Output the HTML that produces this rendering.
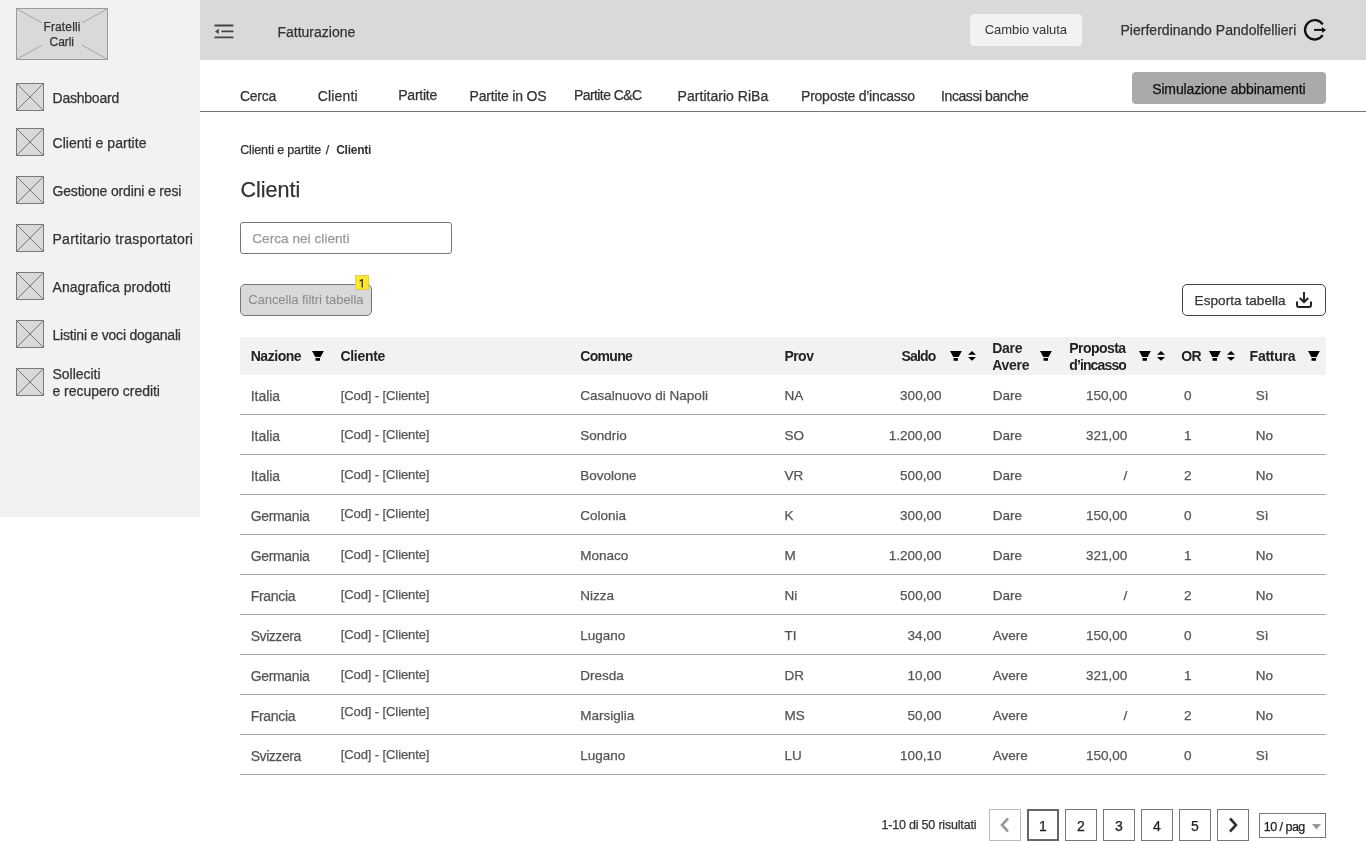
<!DOCTYPE html>
<html><head><meta charset="utf-8"><style>
html,body{margin:0;padding:0;background:#fff;width:1366px;height:841px;overflow:hidden;position:relative;}
body{font-family:"Liberation Sans",sans-serif;}
#w{position:absolute;left:0;top:0;width:1366px;height:841px;will-change:transform;}
.t{position:absolute;white-space:nowrap;line-height:1;-webkit-text-stroke:0.25px currentColor;}
svg{display:block;}
</style></head><body><div id="w">
<div style="position:absolute;left:0px;top:0px;width:200px;height:517px;background:#f2f2f2;"></div>
<svg style="position:absolute;left:16px;top:8px" width="92" height="52" viewBox="0 0 92 52">
<rect x="0.5" y="0.5" width="91" height="51" fill="#d9d9d9" stroke="#9a9a9a" stroke-width="1"/>
<line x1="1" y1="1" x2="91" y2="51" stroke="#a6a6a6" stroke-width="1"/>
<line x1="91" y1="1" x2="1" y2="51" stroke="#a6a6a6" stroke-width="1"/>
<rect x="26" y="12" width="40" height="30" fill="#d9d9d9"/>
</svg>
<div class="t" style="left:43.50px;top:20.84px;font-size:12.00px;color:#333;letter-spacing:0.124px;">Fratelli</div>
<div class="t" style="left:49.50px;top:35.84px;font-size:12.00px;color:#333;letter-spacing:-0.033px;">Carli</div>
<svg style="position:absolute;left:16px;top:83px" width="28" height="28" viewBox="0 0 28 28">
<rect x="0.5" y="0.5" width="27" height="27" fill="#d9d9d9" stroke="#7a7a7a"/>
<line x1="1" y1="1" x2="27" y2="27" stroke="#7a7a7a" stroke-width="1"/>
<line x1="27" y1="1" x2="1" y2="27" stroke="#7a7a7a" stroke-width="1"/>
</svg>
<svg style="position:absolute;left:16px;top:128px" width="28" height="28" viewBox="0 0 28 28">
<rect x="0.5" y="0.5" width="27" height="27" fill="#d9d9d9" stroke="#7a7a7a"/>
<line x1="1" y1="1" x2="27" y2="27" stroke="#7a7a7a" stroke-width="1"/>
<line x1="27" y1="1" x2="1" y2="27" stroke="#7a7a7a" stroke-width="1"/>
</svg>
<svg style="position:absolute;left:16px;top:176px" width="28" height="28" viewBox="0 0 28 28">
<rect x="0.5" y="0.5" width="27" height="27" fill="#d9d9d9" stroke="#7a7a7a"/>
<line x1="1" y1="1" x2="27" y2="27" stroke="#7a7a7a" stroke-width="1"/>
<line x1="27" y1="1" x2="1" y2="27" stroke="#7a7a7a" stroke-width="1"/>
</svg>
<svg style="position:absolute;left:16px;top:224px" width="28" height="28" viewBox="0 0 28 28">
<rect x="0.5" y="0.5" width="27" height="27" fill="#d9d9d9" stroke="#7a7a7a"/>
<line x1="1" y1="1" x2="27" y2="27" stroke="#7a7a7a" stroke-width="1"/>
<line x1="27" y1="1" x2="1" y2="27" stroke="#7a7a7a" stroke-width="1"/>
</svg>
<svg style="position:absolute;left:16px;top:272px" width="28" height="28" viewBox="0 0 28 28">
<rect x="0.5" y="0.5" width="27" height="27" fill="#d9d9d9" stroke="#7a7a7a"/>
<line x1="1" y1="1" x2="27" y2="27" stroke="#7a7a7a" stroke-width="1"/>
<line x1="27" y1="1" x2="1" y2="27" stroke="#7a7a7a" stroke-width="1"/>
</svg>
<svg style="position:absolute;left:16px;top:320px" width="28" height="28" viewBox="0 0 28 28">
<rect x="0.5" y="0.5" width="27" height="27" fill="#d9d9d9" stroke="#7a7a7a"/>
<line x1="1" y1="1" x2="27" y2="27" stroke="#7a7a7a" stroke-width="1"/>
<line x1="27" y1="1" x2="1" y2="27" stroke="#7a7a7a" stroke-width="1"/>
</svg>
<svg style="position:absolute;left:16px;top:368px" width="28" height="28" viewBox="0 0 28 28">
<rect x="0.5" y="0.5" width="27" height="27" fill="#d9d9d9" stroke="#7a7a7a"/>
<line x1="1" y1="1" x2="27" y2="27" stroke="#7a7a7a" stroke-width="1"/>
<line x1="27" y1="1" x2="1" y2="27" stroke="#7a7a7a" stroke-width="1"/>
</svg>
<div class="t" style="left:52.50px;top:91.35px;font-size:14.00px;color:#333;letter-spacing:-0.221px;">Dashboard</div>
<div class="t" style="left:52.50px;top:136.35px;font-size:14.00px;color:#333;letter-spacing:0.037px;">Clienti e partite</div>
<div class="t" style="left:52.50px;top:184.35px;font-size:14.00px;color:#333;letter-spacing:-0.163px;">Gestione ordini e resi</div>
<div class="t" style="left:52.50px;top:232.35px;font-size:14.00px;color:#333;letter-spacing:0.254px;">Partitario trasportatori</div>
<div class="t" style="left:52.50px;top:280.35px;font-size:14.00px;color:#333;letter-spacing:0.041px;">Anagrafica prodotti</div>
<div class="t" style="left:52.50px;top:328.35px;font-size:14.00px;color:#333;letter-spacing:-0.212px;">Listini e voci doganali</div>
<div class="t" style="left:52.50px;top:367.15px;font-size:14.00px;color:#333;letter-spacing:-0.027px;">Solleciti</div>
<div class="t" style="left:52.50px;top:383.55px;font-size:14.00px;color:#333;letter-spacing:-0.042px;">e recupero crediti</div>
<div style="position:absolute;left:200px;top:0px;width:1166px;height:60px;background:#d9d9d9;"></div>
<svg style="position:absolute;left:213px;top:22px" width="22" height="18" viewBox="0 0 22 18">
<g stroke="#444" stroke-width="1.8" stroke-linecap="round">
<line x1="2.2" y1="3.5" x2="19.7" y2="3.5"/>
<line x1="9.2" y1="9.45" x2="19.7" y2="9.45"/>
<line x1="2.2" y1="15.4" x2="19.7" y2="15.4"/>
</g>
<path d="M2 9.45 L5.8 6.8 L5.8 12.1 Z" fill="#444"/>
</svg>
<div class="t" style="left:277.40px;top:24.55px;font-size:14.00px;color:#333;letter-spacing:0.015px;">Fatturazione</div>
<div style="position:absolute;left:970px;top:14px;width:112px;height:32px;background:#f2f2f2;border-radius:4px;"></div>
<div class="t" style="left:984.80px;top:23.00px;font-size:13.00px;color:#333;-webkit-text-stroke:0;letter-spacing:-0.084px;">Cambio valuta</div>
<div class="t" style="left:1120.40px;top:23.15px;font-size:14.00px;color:#333;letter-spacing:0.031px;">Pierferdinando Pandolfellieri</div>
<svg style="position:absolute;left:1300px;top:16px" width="30" height="28" viewBox="0 0 30 28">
<path d="M22.74 8.38 A9.7 9.7 0 1 0 22.74 19.22" fill="none" stroke="#111" stroke-width="2.3"/>
<rect x="14" y="12.9" width="9" height="2" fill="#111"/>
<path d="M22 10.9 L26 13.9 L22 16.9 Z" fill="#111"/>
</svg>
<div class="t" style="left:240.00px;top:89.15px;font-size:14px;color:#333;letter-spacing:-0.269px">Cerca</div>
<div class="t" style="left:317.70px;top:89.15px;font-size:14px;color:#333;letter-spacing:0.185px">Clienti</div>
<div class="t" style="left:398.30px;top:88.15px;font-size:14px;color:#333;letter-spacing:-0.266px">Partite</div>
<div class="t" style="left:469.50px;top:89.15px;font-size:14px;color:#333;letter-spacing:-0.197px">Partite in OS</div>
<div class="t" style="left:573.90px;top:88.15px;font-size:14px;color:#333;letter-spacing:-0.564px">Partite C&amp;C</div>
<div class="t" style="left:677.60px;top:89.15px;font-size:14px;color:#333;letter-spacing:0.030px">Partitario RiBa</div>
<div class="t" style="left:801.10px;top:89.15px;font-size:14px;color:#333;letter-spacing:-0.255px">Proposte d&#8217;incasso</div>
<div class="t" style="left:941.10px;top:89.15px;font-size:14px;color:#333;letter-spacing:-0.435px">Incassi banche</div>
<div style="position:absolute;left:200px;top:111px;width:1166px;height:1px;background:#777;"></div>
<div style="position:absolute;left:1132px;top:72px;width:194px;height:32px;background:#aaaaaa;border-radius:4px;"></div>
<div class="t" style="left:1152.20px;top:82.15px;font-size:14.00px;color:#111;letter-spacing:-0.136px;">Simulazione abbinamenti</div>
<div class="t" style="left:240.20px;top:143.52px;font-size:12.50px;color:#333;letter-spacing:-0.151px;">Clienti e partite</div>
<div class="t" style="left:325.80px;top:143.52px;font-size:12.50px;color:#333;">/</div>
<div class="t" style="left:336.20px;top:143.94px;font-size:12.00px;color:#333;font-weight:bold;-webkit-text-stroke:0;letter-spacing:-0.253px;">Clienti</div>
<div class="t" style="left:240.50px;top:179.50px;font-size:21.50px;color:#333;">Clienti</div>
<div style="position:absolute;left:240px;top:222px;width:212px;height:32px;box-sizing:border-box;border:1px solid #777;border-radius:3px;background:#fff;"></div>
<div class="t" style="left:252.30px;top:232.27px;font-size:13.50px;color:#999;letter-spacing:0.068px;">Cerca nei clienti</div>
<div style="position:absolute;left:240px;top:284px;width:132px;height:32px;box-sizing:border-box;border:1px solid #777;border-radius:5px;background:#d9d9d9;"></div>
<div class="t" style="left:248.20px;top:292.60px;font-size:13.00px;color:#888;-webkit-text-stroke:0;letter-spacing:-0.045px;">Cancella filtri tabella</div>
<div style="position:absolute;left:355px;top:275px;width:14px;height:15px;box-sizing:border-box;border:1px solid #e0d050;background:#ffe72e;"></div>
<svg style="position:absolute;left:355px;top:275px" width="14" height="15" viewBox="0 0 14 15"><path d="M7.2 4.6 V12.1 M7.2 4.6 L5.1 6.0" stroke="#222" stroke-width="1.15" fill="none" stroke-linecap="round" stroke-linejoin="round"/></svg>
<div style="position:absolute;left:1182px;top:284px;width:144px;height:32px;box-sizing:border-box;border:1px solid #444;border-radius:5px;background:#fff;"></div>
<div class="t" style="left:1194.60px;top:294.27px;font-size:13.50px;color:#333;letter-spacing:0.070px;">Esporta tabella</div>
<svg style="position:absolute;left:1295px;top:291px" width="18" height="18" viewBox="0 0 18 18">
<g stroke="#222" stroke-width="2" fill="none">
<path d="M9 1 L9 11"/>
<path d="M4.8 7 L9 11.2 L13.2 7"/>
<path d="M2 10.5 L2 14 Q2 16 4 16 L14 16 Q16 16 16 14 L16 10.5"/>
</g>
</svg>
<div style="position:absolute;left:240px;top:337px;width:1086px;height:38px;background:#f2f2f2;"></div>
<div class="t" style="left:250.70px;top:349.15px;font-size:14.00px;color:#222;font-weight:bold;-webkit-text-stroke:0;letter-spacing:-0.454px;">Nazione</div>
<svg style="position:absolute;left:312px;top:351px" width="12" height="10" viewBox="0 0 12 10"><path d="M0 0 H11.8 L8.6 5.9 H3.3 Z" fill="#000"/><rect x="3.5" y="6.9" width="4.5" height="2.9" rx="0.4" fill="#000"/></svg>
<div class="t" style="left:340.40px;top:349.15px;font-size:14.00px;color:#222;font-weight:bold;-webkit-text-stroke:0;letter-spacing:-0.282px;">Cliente</div>
<div class="t" style="left:580.30px;top:349.15px;font-size:14.00px;color:#222;font-weight:bold;-webkit-text-stroke:0;letter-spacing:-0.683px;">Comune</div>
<div class="t" style="left:784.40px;top:349.15px;font-size:14.00px;color:#222;font-weight:bold;-webkit-text-stroke:0;letter-spacing:-0.531px;">Prov</div>
<div class="t" style="left:901.50px;top:349.15px;font-size:14.00px;color:#222;font-weight:bold;-webkit-text-stroke:0;letter-spacing:-0.803px;">Saldo</div>
<svg style="position:absolute;left:950px;top:351px" width="12" height="10" viewBox="0 0 12 10"><path d="M0 0 H11.8 L8.6 5.9 H3.3 Z" fill="#000"/><rect x="3.5" y="6.9" width="4.5" height="2.9" rx="0.4" fill="#000"/></svg>
<svg style="position:absolute;left:968px;top:351px" width="9" height="10" viewBox="0 0 9 10"><path d="M4 0 L8 3.8 H0 Z" fill="#000"/><path d="M0 6 H8 L4 9.8 Z" fill="#000"/></svg>
<div class="t" style="left:992.30px;top:340.75px;font-size:14.00px;color:#222;font-weight:bold;-webkit-text-stroke:0;letter-spacing:-0.308px;">Dare</div>
<div class="t" style="left:992.30px;top:357.85px;font-size:14.00px;color:#222;font-weight:bold;-webkit-text-stroke:0;letter-spacing:-0.280px;">Avere</div>
<svg style="position:absolute;left:1040px;top:351px" width="12" height="10" viewBox="0 0 12 10"><path d="M0 0 H11.8 L8.6 5.9 H3.3 Z" fill="#000"/><rect x="3.5" y="6.9" width="4.5" height="2.9" rx="0.4" fill="#000"/></svg>
<div class="t" style="left:1069.20px;top:340.75px;font-size:14.00px;color:#222;font-weight:bold;-webkit-text-stroke:0;letter-spacing:-0.534px;">Proposta</div>
<div class="t" style="left:1069.20px;top:357.85px;font-size:14.00px;color:#222;font-weight:bold;-webkit-text-stroke:0;letter-spacing:-0.864px;">d’incasso</div>
<svg style="position:absolute;left:1139px;top:351px" width="12" height="10" viewBox="0 0 12 10"><path d="M0 0 H11.8 L8.6 5.9 H3.3 Z" fill="#000"/><rect x="3.5" y="6.9" width="4.5" height="2.9" rx="0.4" fill="#000"/></svg>
<svg style="position:absolute;left:1157px;top:351px" width="9" height="10" viewBox="0 0 9 10"><path d="M4 0 L8 3.8 H0 Z" fill="#000"/><path d="M0 6 H8 L4 9.8 Z" fill="#000"/></svg>
<div class="t" style="left:1181.30px;top:349.15px;font-size:14.00px;color:#222;font-weight:bold;-webkit-text-stroke:0;letter-spacing:-0.750px;">OR</div>
<svg style="position:absolute;left:1209px;top:351px" width="12" height="10" viewBox="0 0 12 10"><path d="M0 0 H11.8 L8.6 5.9 H3.3 Z" fill="#000"/><rect x="3.5" y="6.9" width="4.5" height="2.9" rx="0.4" fill="#000"/></svg>
<svg style="position:absolute;left:1226.6px;top:351px" width="9" height="10" viewBox="0 0 9 10"><path d="M4 0 L8 3.8 H0 Z" fill="#000"/><path d="M0 6 H8 L4 9.8 Z" fill="#000"/></svg>
<div class="t" style="left:1249.60px;top:349.15px;font-size:14.00px;color:#222;font-weight:bold;-webkit-text-stroke:0;letter-spacing:-0.250px;">Fattura</div>
<svg style="position:absolute;left:1308px;top:351px" width="12" height="10" viewBox="0 0 12 10"><path d="M0 0 H11.8 L8.6 5.9 H3.3 Z" fill="#000"/><rect x="3.5" y="6.9" width="4.5" height="2.9" rx="0.4" fill="#000"/></svg>
<div class="t" style="left:250.70px;top:389.05px;font-size:14.00px;color:#555;letter-spacing:-0.029px;">Italia</div>
<div class="t" style="left:340.70px;top:388.70px;font-size:13.00px;color:#555;letter-spacing:-0.095px;">[Cod] - [Cliente]</div>
<div class="t" style="left:580.30px;top:389.47px;font-size:13.50px;color:#555;">Casalnuovo di Napoli</div>
<div class="t" style="left:784.50px;top:389.47px;font-size:13.50px;color:#555;">NA</div>
<div class="t" style="right:424.60px;top:389.47px;font-size:13.50px;color:#555;">300,00</div>
<div class="t" style="left:992.70px;top:389.47px;font-size:13.50px;color:#555;">Dare</div>
<div class="t" style="right:238.80px;top:389.47px;font-size:13.50px;color:#555;">150,00</div>
<div class="t" style="left:1184.00px;top:389.47px;font-size:13.50px;color:#555;">0</div>
<div class="t" style="left:1255.70px;top:389.47px;font-size:13.50px;color:#555;">Sì</div>
<div style="position:absolute;left:240px;top:414px;width:1086px;height:1px;background:#a6a6a6;"></div>
<div class="t" style="left:250.70px;top:429.05px;font-size:14.00px;color:#555;letter-spacing:-0.029px;">Italia</div>
<div class="t" style="left:340.70px;top:428.20px;font-size:13.00px;color:#555;letter-spacing:-0.095px;">[Cod] - [Cliente]</div>
<div class="t" style="left:580.30px;top:429.47px;font-size:13.50px;color:#555;">Sondrio</div>
<div class="t" style="left:784.50px;top:429.47px;font-size:13.50px;color:#555;">SO</div>
<div class="t" style="right:424.60px;top:429.47px;font-size:13.50px;color:#555;">1.200,00</div>
<div class="t" style="left:992.70px;top:429.47px;font-size:13.50px;color:#555;">Dare</div>
<div class="t" style="right:238.80px;top:429.47px;font-size:13.50px;color:#555;">321,00</div>
<div class="t" style="left:1184.00px;top:429.47px;font-size:13.50px;color:#555;">1</div>
<div class="t" style="left:1255.70px;top:429.47px;font-size:13.50px;color:#555;">No</div>
<div style="position:absolute;left:240px;top:454px;width:1086px;height:1px;background:#a6a6a6;"></div>
<div class="t" style="left:250.70px;top:469.05px;font-size:14.00px;color:#555;letter-spacing:-0.029px;">Italia</div>
<div class="t" style="left:340.70px;top:468.40px;font-size:13.00px;color:#555;letter-spacing:-0.095px;">[Cod] - [Cliente]</div>
<div class="t" style="left:580.30px;top:469.47px;font-size:13.50px;color:#555;">Bovolone</div>
<div class="t" style="left:784.50px;top:469.47px;font-size:13.50px;color:#555;">VR</div>
<div class="t" style="right:424.60px;top:469.47px;font-size:13.50px;color:#555;">500,00</div>
<div class="t" style="left:992.70px;top:469.47px;font-size:13.50px;color:#555;">Dare</div>
<div class="t" style="right:238.80px;top:469.47px;font-size:13.50px;color:#555;">/</div>
<div class="t" style="left:1184.00px;top:469.47px;font-size:13.50px;color:#555;">2</div>
<div class="t" style="left:1255.70px;top:469.47px;font-size:13.50px;color:#555;">No</div>
<div style="position:absolute;left:240px;top:494px;width:1086px;height:1px;background:#a6a6a6;"></div>
<div class="t" style="left:250.70px;top:509.05px;font-size:14.00px;color:#555;letter-spacing:-0.334px;">Germania</div>
<div class="t" style="left:340.70px;top:506.50px;font-size:13.00px;color:#555;letter-spacing:-0.095px;">[Cod] - [Cliente]</div>
<div class="t" style="left:580.30px;top:509.47px;font-size:13.50px;color:#555;">Colonia</div>
<div class="t" style="left:784.50px;top:509.47px;font-size:13.50px;color:#555;">K</div>
<div class="t" style="right:424.60px;top:509.47px;font-size:13.50px;color:#555;">300,00</div>
<div class="t" style="left:992.70px;top:509.47px;font-size:13.50px;color:#555;">Dare</div>
<div class="t" style="right:238.80px;top:509.47px;font-size:13.50px;color:#555;">150,00</div>
<div class="t" style="left:1184.00px;top:509.47px;font-size:13.50px;color:#555;">0</div>
<div class="t" style="left:1255.70px;top:509.47px;font-size:13.50px;color:#555;">Sì</div>
<div style="position:absolute;left:240px;top:534px;width:1086px;height:1px;background:#a6a6a6;"></div>
<div class="t" style="left:250.70px;top:549.05px;font-size:14.00px;color:#555;letter-spacing:-0.334px;">Germania</div>
<div class="t" style="left:340.70px;top:548.40px;font-size:13.00px;color:#555;letter-spacing:-0.095px;">[Cod] - [Cliente]</div>
<div class="t" style="left:580.30px;top:549.47px;font-size:13.50px;color:#555;">Monaco</div>
<div class="t" style="left:784.50px;top:549.47px;font-size:13.50px;color:#555;">M</div>
<div class="t" style="right:424.60px;top:549.47px;font-size:13.50px;color:#555;">1.200,00</div>
<div class="t" style="left:992.70px;top:549.47px;font-size:13.50px;color:#555;">Dare</div>
<div class="t" style="right:238.80px;top:549.47px;font-size:13.50px;color:#555;">321,00</div>
<div class="t" style="left:1184.00px;top:549.47px;font-size:13.50px;color:#555;">1</div>
<div class="t" style="left:1255.70px;top:549.47px;font-size:13.50px;color:#555;">No</div>
<div style="position:absolute;left:240px;top:574px;width:1086px;height:1px;background:#a6a6a6;"></div>
<div class="t" style="left:250.70px;top:589.05px;font-size:14.00px;color:#555;letter-spacing:-0.298px;">Francia</div>
<div class="t" style="left:340.70px;top:588.40px;font-size:13.00px;color:#555;letter-spacing:-0.095px;">[Cod] - [Cliente]</div>
<div class="t" style="left:580.30px;top:589.47px;font-size:13.50px;color:#555;">Nizza</div>
<div class="t" style="left:784.50px;top:589.47px;font-size:13.50px;color:#555;">Ni</div>
<div class="t" style="right:424.60px;top:589.47px;font-size:13.50px;color:#555;">500,00</div>
<div class="t" style="left:992.70px;top:589.47px;font-size:13.50px;color:#555;">Dare</div>
<div class="t" style="right:238.80px;top:589.47px;font-size:13.50px;color:#555;">/</div>
<div class="t" style="left:1184.00px;top:589.47px;font-size:13.50px;color:#555;">2</div>
<div class="t" style="left:1255.70px;top:589.47px;font-size:13.50px;color:#555;">No</div>
<div style="position:absolute;left:240px;top:614px;width:1086px;height:1px;background:#a6a6a6;"></div>
<div class="t" style="left:250.70px;top:629.05px;font-size:14.00px;color:#555;letter-spacing:-0.448px;">Svizzera</div>
<div class="t" style="left:340.70px;top:628.40px;font-size:13.00px;color:#555;letter-spacing:-0.095px;">[Cod] - [Cliente]</div>
<div class="t" style="left:580.30px;top:629.47px;font-size:13.50px;color:#555;">Lugano</div>
<div class="t" style="left:784.50px;top:629.47px;font-size:13.50px;color:#555;">TI</div>
<div class="t" style="right:424.60px;top:629.47px;font-size:13.50px;color:#555;">34,00</div>
<div class="t" style="left:992.70px;top:629.47px;font-size:13.50px;color:#555;">Avere</div>
<div class="t" style="right:238.80px;top:629.47px;font-size:13.50px;color:#555;">150,00</div>
<div class="t" style="left:1184.00px;top:629.47px;font-size:13.50px;color:#555;">0</div>
<div class="t" style="left:1255.70px;top:629.47px;font-size:13.50px;color:#555;">Sì</div>
<div style="position:absolute;left:240px;top:654px;width:1086px;height:1px;background:#a6a6a6;"></div>
<div class="t" style="left:250.70px;top:669.05px;font-size:14.00px;color:#555;letter-spacing:-0.334px;">Germania</div>
<div class="t" style="left:340.70px;top:668.40px;font-size:13.00px;color:#555;letter-spacing:-0.095px;">[Cod] - [Cliente]</div>
<div class="t" style="left:580.30px;top:669.47px;font-size:13.50px;color:#555;">Dresda</div>
<div class="t" style="left:784.50px;top:669.47px;font-size:13.50px;color:#555;">DR</div>
<div class="t" style="right:424.60px;top:669.47px;font-size:13.50px;color:#555;">10,00</div>
<div class="t" style="left:992.70px;top:669.47px;font-size:13.50px;color:#555;">Avere</div>
<div class="t" style="right:238.80px;top:669.47px;font-size:13.50px;color:#555;">321,00</div>
<div class="t" style="left:1184.00px;top:669.47px;font-size:13.50px;color:#555;">1</div>
<div class="t" style="left:1255.70px;top:669.47px;font-size:13.50px;color:#555;">No</div>
<div style="position:absolute;left:240px;top:694px;width:1086px;height:1px;background:#a6a6a6;"></div>
<div class="t" style="left:250.70px;top:709.05px;font-size:14.00px;color:#555;letter-spacing:-0.298px;">Francia</div>
<div class="t" style="left:340.70px;top:705.40px;font-size:13.00px;color:#555;letter-spacing:-0.095px;">[Cod] - [Cliente]</div>
<div class="t" style="left:580.30px;top:709.47px;font-size:13.50px;color:#555;">Marsiglia</div>
<div class="t" style="left:784.50px;top:709.47px;font-size:13.50px;color:#555;">MS</div>
<div class="t" style="right:424.60px;top:709.47px;font-size:13.50px;color:#555;">50,00</div>
<div class="t" style="left:992.70px;top:709.47px;font-size:13.50px;color:#555;">Avere</div>
<div class="t" style="right:238.80px;top:709.47px;font-size:13.50px;color:#555;">/</div>
<div class="t" style="left:1184.00px;top:709.47px;font-size:13.50px;color:#555;">2</div>
<div class="t" style="left:1255.70px;top:709.47px;font-size:13.50px;color:#555;">No</div>
<div style="position:absolute;left:240px;top:734px;width:1086px;height:1px;background:#a6a6a6;"></div>
<div class="t" style="left:250.70px;top:749.05px;font-size:14.00px;color:#555;letter-spacing:-0.448px;">Svizzera</div>
<div class="t" style="left:340.70px;top:748.40px;font-size:13.00px;color:#555;letter-spacing:-0.095px;">[Cod] - [Cliente]</div>
<div class="t" style="left:580.30px;top:749.47px;font-size:13.50px;color:#555;">Lugano</div>
<div class="t" style="left:784.50px;top:749.47px;font-size:13.50px;color:#555;">LU</div>
<div class="t" style="right:424.60px;top:749.47px;font-size:13.50px;color:#555;">100,10</div>
<div class="t" style="left:992.70px;top:749.47px;font-size:13.50px;color:#555;">Avere</div>
<div class="t" style="right:238.80px;top:749.47px;font-size:13.50px;color:#555;">150,00</div>
<div class="t" style="left:1184.00px;top:749.47px;font-size:13.50px;color:#555;">0</div>
<div class="t" style="left:1255.70px;top:749.47px;font-size:13.50px;color:#555;">Sì</div>
<div style="position:absolute;left:240px;top:774px;width:1086px;height:1px;background:#a6a6a6;"></div>
<div class="t" style="left:881.40px;top:819.22px;font-size:12.50px;color:#333;letter-spacing:-0.188px;">1-10 di 50 risultati</div>
<div style="position:absolute;left:989px;top:809px;width:32px;height:32px;box-sizing:border-box;border:1px solid #bbb;background:#fff;"></div>
<svg style="position:absolute;left:999px;top:817px" width="12" height="16" viewBox="0 0 12 16"><path d="M9 1.5 L3 8 L9 14.5" fill="none" stroke="#999" stroke-width="2.6"/></svg>
<div style="position:absolute;left:1027px;top:809px;width:32px;height:32px;box-sizing:border-box;border:2px solid #666;background:#fff;"></div>
<div style="position:absolute;left:1065px;top:809px;width:32px;height:32px;box-sizing:border-box;border:1px solid #777;background:#fff;"></div>
<div style="position:absolute;left:1103px;top:809px;width:32px;height:32px;box-sizing:border-box;border:1px solid #777;background:#fff;"></div>
<div style="position:absolute;left:1141px;top:809px;width:32px;height:32px;box-sizing:border-box;border:1px solid #777;background:#fff;"></div>
<div style="position:absolute;left:1179px;top:809px;width:32px;height:32px;box-sizing:border-box;border:1px solid #777;background:#fff;"></div>
<div style="position:absolute;left:1217px;top:809px;width:32px;height:32px;box-sizing:border-box;border:1px solid #777;background:#fff;"></div>
<div class="t" style="left:1043.00px;top:819.15px;font-size:14.00px;color:#222;width:32px;text-align:center;margin-left:-16px;">1</div>
<div class="t" style="left:1081.00px;top:819.15px;font-size:14.00px;color:#222;width:32px;text-align:center;margin-left:-16px;">2</div>
<div class="t" style="left:1119.00px;top:819.15px;font-size:14.00px;color:#222;width:32px;text-align:center;margin-left:-16px;">3</div>
<div class="t" style="left:1157.00px;top:819.15px;font-size:14.00px;color:#222;width:32px;text-align:center;margin-left:-16px;">4</div>
<div class="t" style="left:1195.00px;top:819.15px;font-size:14.00px;color:#222;width:32px;text-align:center;margin-left:-16px;">5</div>
<svg style="position:absolute;left:1227px;top:817px" width="12" height="16" viewBox="0 0 12 16"><path d="M3 1.5 L9 8 L3 14.5" fill="none" stroke="#333" stroke-width="2.6"/></svg>
<div style="position:absolute;left:1259px;top:813px;width:67px;height:25px;box-sizing:border-box;border:1px solid #777;background:#fff;"></div>
<div class="t" style="left:1263.70px;top:820.52px;font-size:12.50px;color:#222;letter-spacing:-0.510px;">10 / pag</div>
<svg style="position:absolute;left:1312px;top:824px" width="9" height="6" viewBox="0 0 9 6"><path d="M0 0 H9 L4.5 5.5 Z" fill="#999"/></svg>
</div></body></html>
